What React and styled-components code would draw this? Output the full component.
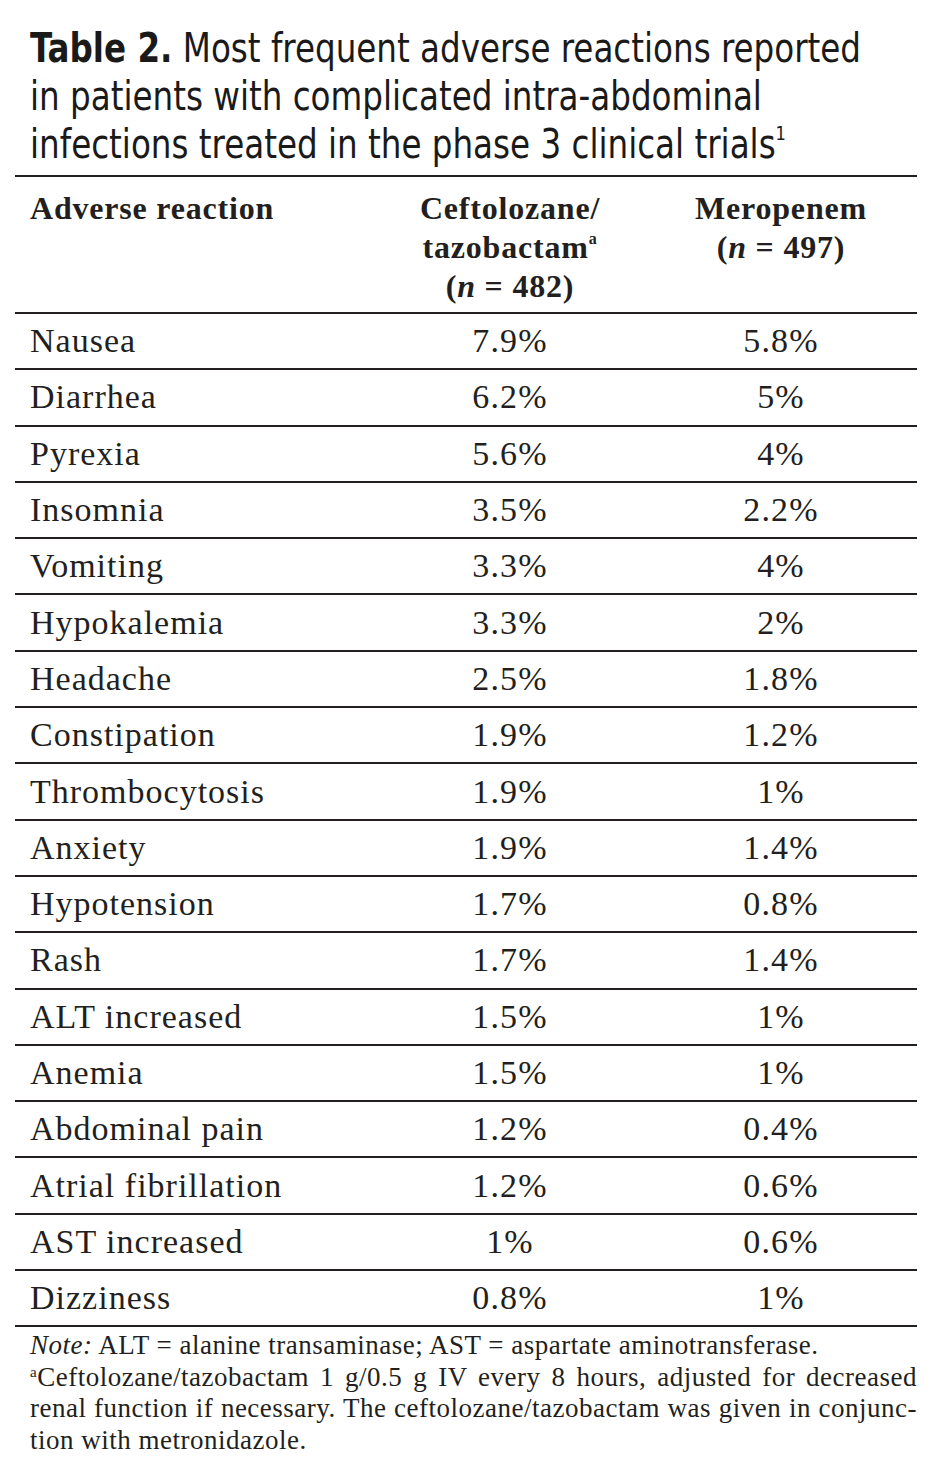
import styled, { createGlobalStyle } from "styled-components";

const GlobalStyle = createGlobalStyle`
  html, body {
    margin: 0;
    padding: 0;
    background: #fff;
  }
`;

const Page = styled.div`
  width: 940px;
  padding: 24px 23px 20px 15px;
  box-sizing: border-box;
  color: #231f20;
`;

const Title = styled.h1`
  margin: 0 0 7px 15px;
  font-family: "DejaVu Sans Condensed", "Liberation Sans", sans-serif;
  font-stretch: condensed;
  font-weight: 400;
  font-size: 40px;
  line-height: 48px;
  color: #1a1a1a;
  white-space: nowrap;
  transform: scaleX(0.905);
  transform-origin: left top;
  b {
    font-weight: 700;
  }
  sup {
    font-size: 20px;
    line-height: 0;
    vertical-align: 18px;
  }
`;

const Table = styled.table`
  width: 902px;
  table-layout: fixed;
  border-collapse: collapse;
  font-family: "Liberation Serif", serif;
  border-top: 2px solid #231f20;
  border-bottom: 2px solid #231f20;
`;

const Head = styled.th`
  width: ${(p) => p.w}px;
  text-align: ${(p) => (p.left ? "left" : "center")};
  vertical-align: top;
  padding: 12px 0 0 ${(p) => (p.left ? 15 : 0)}px;
  height: 137px;
  box-sizing: border-box;
  font-size: 32px;
  line-height: 39px;
  font-weight: 700;
  letter-spacing: 0.8px;
  border-bottom: 2px solid #231f20;
  sup {
    font-size: 16px;
    line-height: 0;
    vertical-align: 14px;
  }
  i {
    font-weight: 700;
  }
`;

const Row = styled.tr`
  border-bottom: 2px solid #231f20;
  &:last-child {
    border-bottom: none;
  }
`;

const Cell = styled.td`
  height: 54.3px;
  padding: 0 0 0 ${(p) => (p.left ? 15 : 0)}px;
  text-align: ${(p) => (p.left ? "left" : "center")};
  vertical-align: middle;
  font-size: 34px;
  letter-spacing: ${(p) => (p.left ? 1 : 1.2)}px;
`;

const Note = styled.div`
  margin: 3px 0 0 15px;
  font-family: "Liberation Serif", serif;
  font-size: 27px;
  line-height: 31.5px;
  letter-spacing: 0.5px;
  i {
    font-style: italic;
  }
  sup {
    font-size: 15px;
    line-height: 0;
    vertical-align: 9px;
  }
`;

const NoteLine = styled.div`
  white-space: nowrap;
  text-align: ${(p) => (p.justify ? "justify" : "left")};
  text-align-last: ${(p) => (p.justify ? "justify" : "left")};
`;

const rows = [
  ["Nausea", "7.9%", "5.8%"],
  ["Diarrhea", "6.2%", "5%"],
  ["Pyrexia", "5.6%", "4%"],
  ["Insomnia", "3.5%", "2.2%"],
  ["Vomiting", "3.3%", "4%"],
  ["Hypokalemia", "3.3%", "2%"],
  ["Headache", "2.5%", "1.8%"],
  ["Constipation", "1.9%", "1.2%"],
  ["Thrombocytosis", "1.9%", "1%"],
  ["Anxiety", "1.9%", "1.4%"],
  ["Hypotension", "1.7%", "0.8%"],
  ["Rash", "1.7%", "1.4%"],
  ["ALT increased", "1.5%", "1%"],
  ["Anemia", "1.5%", "1%"],
  ["Abdominal pain", "1.2%", "0.4%"],
  ["Atrial fibrillation", "1.2%", "0.6%"],
  ["AST increased", "1%", "0.6%"],
  ["Dizziness", "0.8%", "1%"],
];

export default function App() {
  return (
    <Page>
      <GlobalStyle />
      <Title>
        <b>Table 2.</b> Most frequent adverse reactions reported
        <br />
        in patients with complicated intra-abdominal
        <br />
        infections treated in the phase 3 clinical trials<sup>1</sup>
      </Title>
      <Table>
        <thead>
          <tr>
            <Head left w={360}>Adverse reaction</Head>
            <Head w={270}>
              Ceftolozane/
              <br />
              tazobactam<sup>a</sup>
              <br />
              (<i>n</i> = 482)
            </Head>
            <Head w={272}>
              Meropenem
              <br />
              (<i>n</i> = 497)
            </Head>
          </tr>
        </thead>
        <tbody>
          {rows.map(([name, a, b]) => (
            <Row key={name}>
              <Cell left>{name}</Cell>
              <Cell>{a}</Cell>
              <Cell>{b}</Cell>
            </Row>
          ))}
        </tbody>
      </Table>
      <Note>
        <NoteLine>
          <i>Note:</i> ALT = alanine transaminase; AST = aspartate aminotransferase.
        </NoteLine>
        <NoteLine justify>
          <sup>a</sup>Ceftolozane/tazobactam 1 g/0.5 g IV every 8 hours, adjusted for decreased
        </NoteLine>
        <NoteLine justify>
          renal function if necessary. The ceftolozane/tazobactam was given in conjunc-
        </NoteLine>
        <NoteLine>tion with metronidazole.</NoteLine>
      </Note>
    </Page>
  );
}
